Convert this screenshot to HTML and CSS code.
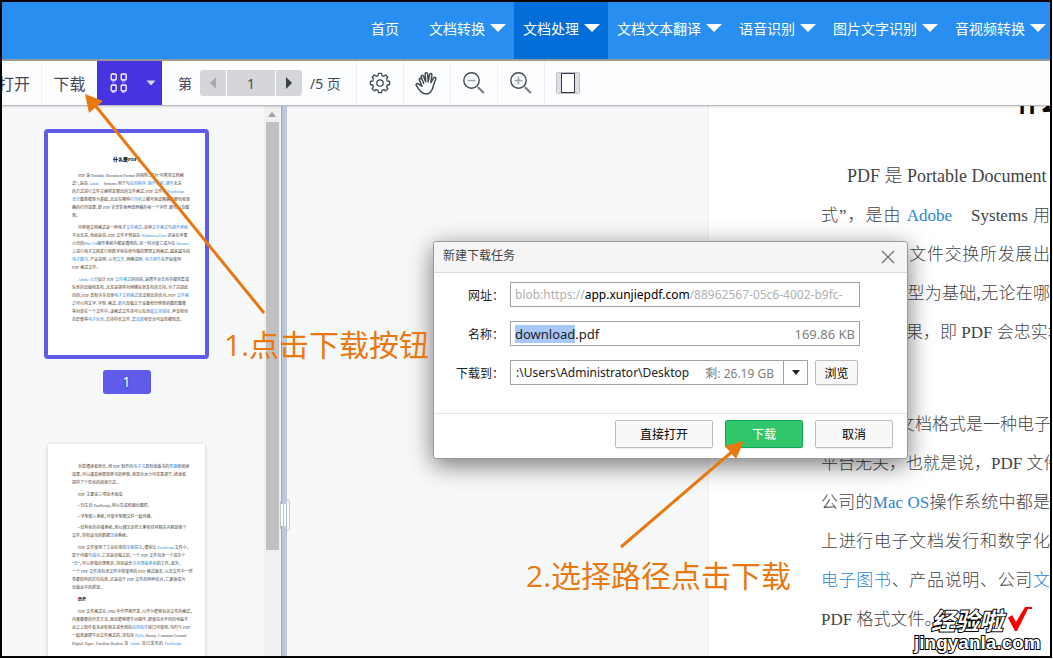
FILE: index.html
```html
<!DOCTYPE html>
<html lang="zh-CN">
<head>
<meta charset="utf-8">
<title>PDF 在线阅读</title>
<link rel="stylesheet" href="styles.css">
</head>
<body>
<div class="app">
  <header class="topbar">
    <nav class="nav">
      <a class="nav-item home" href="#">首页</a>
      <a class="nav-item" href="#">文档转换<i class="caret"></i></a>
      <a class="nav-item active" href="#">文档处理<i class="caret"></i></a>
      <a class="nav-item" href="#">文档文本翻译<i class="caret"></i></a>
      <a class="nav-item" href="#">语音识别<i class="caret"></i></a>
      <a class="nav-item" href="#">图片文字识别<i class="caret"></i></a>
      <a class="nav-item last" href="#">音视频转换<i class="caret"></i></a>
    </nav>
  </header>

  <div class="toolbar">
    <button class="tool open" type="button">打开</button>
    <button class="tool save" type="button">下载</button>
    <button class="tool view" type="button" aria-label="缩略图">
      <svg width="18" height="20" viewBox="0 0 18 20" fill="none" stroke="#fff" stroke-width="1.3"><rect x="1.2" y="1" width="5" height="6" rx="1"/><rect x="11.200" y="1" width="5" height="6" rx="1"/><rect x="1.200" y="12" width="5" height="6" rx="1"/><rect x="11.200" y="12" width="5" height="6" rx="1"/><path d="M2 9h3M12 9h3M2 19.500h3M12 19.500h3" stroke-width=".8" opacity=".7"/></svg>
      <svg width="10" height="6" viewBox="0 0 10 6"><path d="M.5.5h9L5 5.500z" fill="#dcd8fb"/></svg>
    </button>
    <div class="pager">
      <label for="page">第</label>
      <div class="pager-box">
        <button type="button" aria-label="上一页"><svg width="6" height="12"><path d="M6 0v12L0 6z" fill="#a9aab0"/></svg></button>
        <input id="page" type="text" value="1">
        <button type="button" aria-label="下一页"><svg width="6" height="12"><path d="M0 0v12l6-6z" fill="#3c3e48"/></svg></button>
      </div>
      <span>/5 页</span>
    </div>
    <button class="tool icon" type="button" aria-label="设置"><svg width="22" height="22" viewBox="0 0 22 22" fill="none" stroke="#454856" stroke-width="1.3" stroke-linejoin="round"><circle cx="11" cy="11" r="3.200"/><path d="M9.500 1.300h3l.5 2.300 1.700.7 2-1.300 2.200 2.200-1.300 2 .7 1.700 2.300.6v3l-2.300.5-.7 1.700 1.300 2-2.200 2.200-2-1.300-1.700.7-.5 2.300h-3L9 18.300l-1.700-.7-2 1.300-2.200-2.200 1.300-2-.7-1.700-2.300-.5v-3l2.300-.6.700-1.700-1.300-2L5.300 3l2 1.300L9 3.600z"/></svg></button>
    <button class="tool icon" type="button" aria-label="拖动"><svg width="24" height="24" viewBox="0 0 24 24" fill="none" stroke="#3e414e" stroke-width="1.400" stroke-linecap="round" stroke-linejoin="round"><path d="M8.700 12.500 6.300 6.200C5.600 4.300 7.800 3.500 8.500 5.300l2.300 5.600-.7-7.600c-.1-2.200 2.300-2.300 2.500-.2l.6 7.700 1.300-7c.4-2 2.700-1.600 2.400.4l-1 7.500 2.600-4.600c1-1.700 3-.7 2.200 1.100-1.200 2.800-1.500 3.700-2.200 6.300-.5 2.500-1.300 4.500-2.800 6.300-1.200 1.500-2.300 2.200-4 2.200-2.300 0-4.300-.7-5.700-2.200L1.800 15.300c-1.600-1.700-.1-3.500 1.700-2.400l3.300 2.200"/><path d="m6.800 15-2.500-6.200c-.5-1.300.9-2.100 1.800-.8"/></svg></button>
    <button class="tool icon" type="button" aria-label="缩小"><svg width="24" height="24" viewBox="0 0 24 24" fill="none"><circle cx="9.500" cy="9.500" r="7.700" stroke="#454856" stroke-width="1.400"/><path d="M5.500 9.500h8" stroke="#9ea0a8" stroke-width="1.500"/><path d="m15.800 16 6 6" stroke="#7d7f88" stroke-width="2.200"/></svg></button>
    <button class="tool icon" type="button" aria-label="放大"><svg width="24" height="24" viewBox="0 0 24 24" fill="none"><circle cx="9.500" cy="9.500" r="7.700" stroke="#454856" stroke-width="1.400"/><path d="M5.500 9.500h8M9.500 5.500v8" stroke="#9ea0a8" stroke-width="1.500"/><path d="m15.800 16 6 6" stroke="#7d7f88" stroke-width="2.200"/></svg></button>
    <button class="tool icon" type="button" aria-label="整页"><svg width="24" height="22" viewBox="0 0 24 22"><rect x=".5" y=".5" width="23" height="21" rx="1" fill="#dddde2" stroke="#bfbfc6"/><rect x="5.500" y="1.500" width="13" height="19" fill="#fff" stroke="#343746"/></svg></button>
  </div>

  <main class="workspace">
    <aside class="sidebar">
      <div class="thumbs">
        <section class="thumb selected">
          <h3 class="thumb-title">什么是PDF？</h3>
          <p><span class="in">PDF 是 Portable Document Format 的简称，意为“可携带文档格</span><span>式”，是由 <a href="#">Adobe</a>　Systems 用于与<a href="#">应用程序</a>、<a href="#">操作系统</a>、<a href="#">硬件</a>无关</span><span>的方式进行文件交换所发展出的文件格式。PDF 文件以 <a href="#">PostScript</a></span><span><a href="#">语言</a>图象模型为基础，无论在哪种<a href="#">打印机</a>上都可保证精确的颜色和准</span><span>确的打印效果，即 PDF 会忠实地再现原稿的每一个字符、颜色以及图</span><span class="end">象。</span></p>
          <p><span class="in">可移植文档格式是一种电子<a href="#">文件格式</a>。这种<a href="#">文件格式</a>与<a href="#">操作系统</a></span><span>平台无关，也就是说，PDF 文件不管是在 <a href="#">Windows</a>，<a href="#">Unix</a> 还是在苹果</span><span>公司的<a href="#">Mac OS</a>操作系统中都是通用的。这一特点使它成为在 <a href="#">Internet</a></span><span>上进行电子文档发行和数字化信息传播的理想文档格式。越来越多的</span><span><a href="#">电子图书</a>、产品说明、公司<a href="#">文告</a>、网络资料、<a href="#">电子邮件</a>在开始使用</span><span class="end">PDF 格式文件。</span></p>
          <p><span class="in"><a href="#">Adobe 公司</a>设计 PDF <a href="#">文件格式</a>的目的，是跨平台支持多媒体集成</span><span>信息的出版和发布，尤其是提供对网络信息发布的支持。为了达到此</span><span>目的，PDF 具有许多其他<a href="#">电子文档格式</a>无法相比的优点。PDF <a href="#">文件格</a></span><span><a href="#">式</a>可以将文字、字型、格式、<a href="#">颜色</a>及独立于设备和分辨率的图形图像</span><span>等封装在一个文件中。该格式文件还可以包含<a href="#">超文本链接</a>、声音和动</span><span class="end">态影像等<a href="#">电子信息</a>，支持特长文件，<a href="#">集成度</a>和安全可靠性都较高。</span></p>
        </section>
        <div class="thumb-no">1</div>
        <section class="thumb second">
          <p><span class="in">对普通读者而言，用 PDF 制作的<a href="#">电子书</a>具有纸版书的<a href="#">质感</a>和阅读</span><span>效果，可以逼真地展现原书的原貌，而显示大小可任意调节，给读者</span><span class="end">提供了个性化的阅读方式。</span></p>
          <p><span class="in end">PDF 主要由三项技术组成:</span></p>
          <ul>
            <li><span class="in end">• 衍生自 PostScript，用以生成和输出图形;</span></li>
            <li><span class="in end">• 字型嵌入系统，可使字型随文件一起传输;</span></li>
            <li><span class="in">• 结构化的存储系统，用以绑定这些元素和任何相关内容到单个</span><span class="end">文件，带有适当的数据<a href="#">压缩</a>系统。</span></li>
          </ul>
          <p><span class="in">PDF 文件使用了工业标准的<a href="#">压缩算法</a>，通常比 <a href="#">PostScript</a> 文件小，</span><span>易于传输与<a href="#">储存</a>。它还是页独立的，一个 PDF 文件包含一个或多个</span><span>“<a href="#">页</a>”，可以单独处理各页，特别适合<a href="#">多处理器系统</a>的工作。此外，</span><span>一个 PDF 文件还包含文件中所使用的 PDF 格式版本，以及文件中一些</span><span>重要结构的定位信息。正是由于 PDF 文件的种种优点，它逐渐成为</span><span class="end">出版业中的新宠。</span></p>
          <p><span class="in end"><b>历史</b></span></p>
          <p><span class="in">PDF 文件格式在 1990 年代早期开发，以作为能够包括文件的格式，</span><span>内置图像的分享方法，而且能够跨平台操作，即使完全不同的电脑平</span><span>台之上软件者未必有相关或合用的<a href="#">应用软件</a>接口可使用。当时与 PDF</span><span>一起竞逐跨平台文件格式的，还包括 <a href="#">DjVu</a>、Envoy、Common Ground</span><span>Digital Paper、Farallon Replica 及 <a href="#">Adobe</a> 自己发布的 <a href="#">PostScript</a></span></p>
        </section>
      </div>
      <div class="scroll"><svg width="8" height="5"><path d="M0 5h8L4 0z" fill="#a0a0a0"/></svg><div class="scroll-thumb"></div></div>
    </aside>
    <div class="splitter"><div class="grip"></div></div>
    <div class="viewer">
      <article class="page">
        <h1>什么是PDF？</h1>
        <p><span class="in end">PDF 是 Portable Document</span><span>式”，是由 <a href="#">Adobe</a>　Systems 用</span><span>的方式进行文件交换所发展出</span><span>语言图象模型为基础,无论在哪</span><span>确的打印效果，即 PDF 会忠实地</span><span class="end">象。</span></p>
        <p><span class="in">可移植文档格式是一种电子</span><span>平台无关，也就是说，PDF 文件</span><span>公司的<a href="#">Mac OS</a>操作系统中都是</span><span>上进行电子文档发行和数字化</span><span><a href="#">电子图书</a>、产品说明、公司<a href="#">文</a></span><span class="end">PDF 格式文件。</span></p>
      </article>
    </div>
  </main>
</div>

<form class="dialog" role="dialog" aria-labelledby="dlg-title">
  <div class="dlg-head">
    <h2 id="dlg-title">新建下载任务</h2>
    <button class="close" type="button" aria-label="关闭"><svg width="14" height="14" viewBox="0 0 14 14"><path d="m1 1 12 12M13 1 1 13" stroke="#6b6b6b" stroke-width="1.200"/></svg></button>
  </div>
  <div class="dlg-body">
    <span class="lbl" id="url-label">网址：</span>
    <div class="field url" role="textbox" aria-labelledby="url-label" contenteditable="true" spellcheck="false">blob:https://<b>app.xunjiepdf.com</b>/88962567-05c6-4002-b9fc-</div>
    <label class="lbl" for="name">名称：</label>
    <div class="field"><input id="name" type="text" value="download.pdf" spellcheck="false"><span class="hint">169.86 KB</span></div>
    <label class="lbl" for="path">下载到：</label>
    <div class="row">
      <div class="field path"><input id="path" type="text" value=":\Users\Administrator\Desktop" spellcheck="false"><span class="hint">剩: 26.19 GB</span><button class="drop" type="button" aria-label="选择路径"><svg width="8" height="5"><path d="M0 0h8L4 5z" fill="#222"/></svg></button></div>
      <button class="btn browse" type="button">浏览</button>
    </div>
  </div>
  <div class="dlg-foot">
    <button class="btn wide" type="button">直接打开</button>
    <button class="btn primary" type="button">下载</button>
    <button class="btn" type="button">取消</button>
  </div>
</form>

<svg class="arrows" fill="#e8780f" stroke="#e8780f">
  <path d="M94 104 264 313" stroke-width="3"/><path d="m85 94 18 7-14 12z" stroke="none"/>
  <path d="M621 547 734 450" stroke-width="3"/><path d="m744 441-19 5 11 13z" stroke="none"/>
</svg>
<p class="note note-one">1.点击下载按钮</p>
<p class="note note-two">2.选择路径点击下载</p>
<div class="mark">
  <div class="mark-top"><span>经验啦</span><svg width="24" height="24" viewBox="0 0 24 24"><path d="m0 11 4-3 4 7L17 0h7v2h-4L9 24H7z" fill="#f00"/></svg></div>
  <div class="mark-url">jingyanla.com</div>
</div>
<script src="main.js"></script>
</body>
</html>
```
FILE: main.js
```js
const nameBox = document.getElementById("name");
nameBox.focus();
nameBox.setSelectionRange(0, nameBox.value.lastIndexOf("."));
```
FILE: styles.css
```css
* { box-sizing: border-box; }
html, body { height: 100%; }
body {
  margin: 0;
  padding: 0 1px 1px 0;
  position: relative;
  overflow: hidden;
  background: #fff;
  font-family: "Noto Sans", "Noto Sans CJK SC", sans-serif;
  font-size: 14px;
  color: #454856;
}
a { color: inherit; text-decoration: none; }
button, input { font: inherit; color: inherit; border: 0; padding: 0; margin: 0; background: none; }
svg { display: block; flex: none; }
h1, h2, h3, p, ul { margin: 0; padding: 0; }

.app {
  height: 100%;
  display: flex;
  flex-direction: column;
  border: 2px solid #000;
  overflow: hidden;
}
.topbar { flex: none; height: 59px; background: #288ff1; border-bottom: 2px solid #999; overflow: hidden; }
.nav { display: flex; justify-content: flex-end; height: 100%; }
.nav-item {
  display: flex;
  align-items: center;
  gap: 5px;
  padding: 0 8px 5px 9px;
  color: #fff;
  white-space: nowrap;
  font-family: "Noto Sans CJK SC", sans-serif;
}
.nav-item.home { padding: 0 21px 5px; }
.nav-item.last { padding-right: 4px; }
.nav-item.active { background: #036ed7; }
.caret { border: 8px solid transparent; border-top-color: #fff; border-bottom: 0; }

.toolbar {
  flex: none;
  height: 45px;
  display: flex;
  background: #fcfdff;
  border-bottom: 1px solid #b8babf;
  box-shadow: 0 1px 2px #0002;
  position: relative;
}
.tool { display: flex; align-items: center; justify-content: center; font-size: 16px; white-space: nowrap; }
.open { width: 40px; justify-content: flex-end; padding-right: 11px; border-right: 1px solid #eef0f4; overflow: hidden; }
.save { width: 55px; }
.view { width: 65px; background: #4733e0; justify-content: space-between; padding: 0 6px 0 13px; }
.pager { display: flex; align-items: center; gap: 8px; padding: 0 15px 0 16px; border-right: 1px solid #eeeff8; }
.pager-box { display: flex; gap: 1px; height: 26px; border-radius: 3px; overflow: hidden; }
.pager-box button { width: 26px; background: #d5d6da; display: flex; align-items: center; justify-content: center; }
.pager-box input { width: 48px; background: #d5d6da; text-align: center; }
.icon { width: 47px; border-right: 1px solid #eeeff8; }
.icon:last-child { border: 0; }

.workspace { flex: 1; min-height: 0; display: flex; background: #f6f8fa; }
.sidebar { width: 280px; display: flex; border-right: 1px solid #9aa3b3; overflow: hidden; }
.thumbs { flex: 1; display: flex; flex-direction: column; align-items: center; padding: 23px 13px 0 0; }
.thumb {
  flex: none;
  width: 157px;
  padding: 20px 24px;
  background: #fff;
  box-shadow: 0 1px 4px #0003;
  font: 4px/8px "Liberation Serif", "Noto Sans CJK SC", serif;
  font-feature-settings: "halt";
  color: #444;
}
.thumb.selected { width: 165px; height: 230px; border: 4px solid #5f5ceb; border-radius: 4px; box-shadow: none; padding-top: 23px; }
.thumb.second { height: 280px; margin-top: 50px; padding-top: 19px; }
.thumb-title { font-size: 5px; font-weight: 900; color: #000; text-align: center; margin-bottom: 8px; }
.thumb p { margin-bottom: 4px; }
.thumb ul { list-style: none; margin-bottom: 4px; }
.thumb p:has(+ ul), .thumb li + li { margin-bottom: 3px; }
.thumb li:first-child { margin-bottom: 3px; }
.thumb li:last-child { margin-bottom: 0; }
.thumb span, .page span { display: block; white-space: nowrap; text-align-last: justify; }
.thumb a { color: #2f8de0; }
.thumb .in { padding-left: 6px; }
.thumb .end, .page .end { text-align-last: left; }
.thumb b { color: #000; }
.thumb-no {
  flex: none;
  width: 48px;
  height: 24px;
  margin-top: 11px;
  border-radius: 3px;
  background: #5f5ceb;
  color: #fff;
  text-align: center;
  line-height: 24px;
  text-shadow: 0 1px 2px #0008;
}
.scroll { width: 16px; margin-right: 1px; background: #f0f0f0; display: flex; flex-direction: column; align-items: center; padding-top: 6px; }
.scroll-thumb { width: 13px; height: 428px; margin-top: 5px; background: #c1c1c1; }
.splitter { width: 5px; background: #bdc8dc; position: relative; }
.grip {
  position: absolute;
  left: -2px;
  top: 393px;
  width: 10px;
  height: 32px;
  border: 1px solid #c4c6cb;
  border-radius: 3px;
  background: linear-gradient(90deg, #fff 2px, #b4c2d8 2px 3px, #fff 3px 5px, #b4c2d8 5px 6px, #fff 6px) content-box #fff;
  padding: 4px 0;
}

.viewer { flex: 1; min-width: 0; display: grid; grid-template-columns: 421fr 342fr; overflow: hidden; }
.page {
  grid-column: 2;
  min-width: 0;
  padding-left: 112px;
  background: #fff;
  border-left: 1px solid #eceef0;
  font: 300 17px/39px "Liberation Serif", "Noto Sans CJK SC", serif;
  color: #444;
}
.page h1 { margin: -24px 0 36px; padding-left: 196px; font: 900 23px/39px "Noto Sans CJK SC", sans-serif; color: #000; white-space: nowrap; }
.page p { margin-bottom: 14px; }
.page .in { padding-left: 26px; }
.page .in.end { font-size: 18px; }
.page a { color: #2c84d4; }

.dialog {
  position: absolute;
  left: 433px;
  top: 241px;
  width: 475px;
  border: 1px solid #96999e;
  border-radius: 3px;
  background: #fff;
  box-shadow: 0 6px 24px #0008;
  font-size: 13px;
  color: #222;
}
.dlg-head {
  height: 31px;
  display: flex;
  align-items: center;
  justify-content: space-between;
  padding: 0 12px 0 9px;
  background: #f5f5f5;
  border-bottom: 1px solid #d9d9d9;
  border-radius: 3px 3px 0 0;
}
.dlg-head h2 { font: 12px/18px "Noto Sans CJK SC", sans-serif; color: #444; padding-bottom: 4px; }
.dlg-body {
  display: grid;
  grid-template-columns: 70px 1fr;
  gap: 14px 6px;
  align-items: center;
  padding: 9px 47px 28px 0;
}
.lbl { text-align: right; font: 12px/18px "Noto Sans CJK SC", sans-serif; white-space: nowrap; }
.field {
  height: 25px;
  min-width: 0;
  display: flex;
  align-items: center;
  border: 1px solid #a2a2a2;
  padding: 0 4px;
  white-space: nowrap;
}
.field input { flex: 1; min-width: 0; outline: 0; caret-color: transparent; }
.field input::selection { background: #a8c7fa; color: #222; }
.url { color: #b0b0b0; font-size: 12px; }
.url b { font-weight: 400; color: #000; }
.hint { color: #808080; }
.row { display: flex; gap: 7px; }
.path { width: 298px; padding: 0 0 0 5px; font-size: 12px; }
.drop { width: 24px; height: 100%; margin-left: 9px; border-left: 1px solid #a2a2a2; display: flex; align-items: center; justify-content: center; }
.btn {
  width: 78px;
  height: 28px;
  border: 1px solid #bdbdbd;
  border-radius: 2px;
  background: #f8f8f8;
  box-shadow: 0 1px 1px #0001;
  font: 12px/18px "Noto Sans CJK SC", sans-serif;
  color: #000;
}
.browse { width: 43px; height: 25px; }
.wide { width: 98px; }
.primary { background: #31c66c; border-color: #12a75a; color: #fff; }
.dlg-foot { display: flex; justify-content: flex-end; gap: 12px; padding: 6px 14px 10px; border-top: 1px solid #e6e6e6; }

.arrows { position: absolute; left: 0; top: 0; width: 100%; height: 100%; pointer-events: none; }
.note {
  position: absolute;
  font: 400 30px/40px "Open Sans", "Noto Sans CJK SC", sans-serif;
  color: #e8780f;
  white-space: nowrap;
}
.note-one { left: 224px; top: 325px; }
.note-two { left: 526px; top: 556px; }
.mark { position: absolute; left: 914px; top: 607px; color: #fff; -webkit-text-stroke: 2px #000; paint-order: stroke fill; }
.mark-top { display: flex; gap: 5px; padding-left: 17px; font: italic 700 24px/26px "Noto Sans CJK SC", sans-serif; }
.mark-url { font: bold 19px/20px "Liberation Sans", sans-serif; }
```
